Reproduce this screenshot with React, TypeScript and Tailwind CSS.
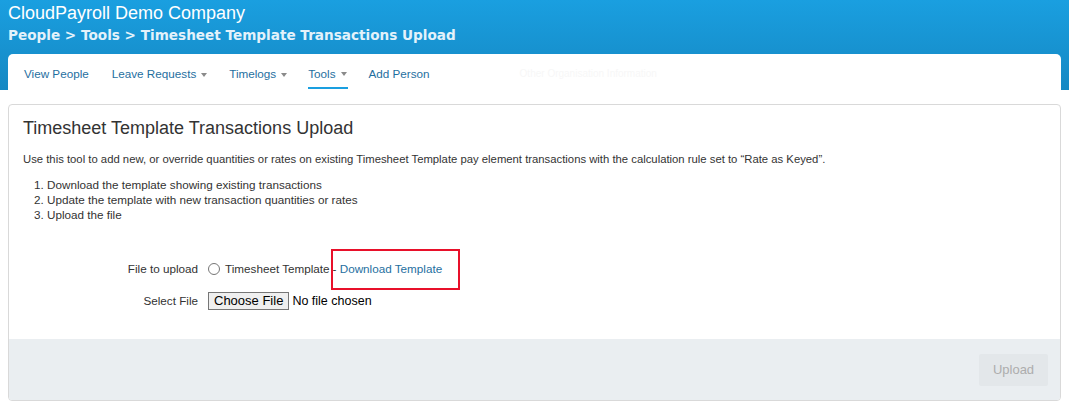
import React from "react";

function Caret() {
  return <span className="ml-[5px] inline-block h-0 w-0 border-x-[3px] border-t-[4px] border-x-transparent border-t-[#8a8a8a] align-middle" />;
}

export default function App() {
  return (
    <div className="min-h-[411px] bg-white font-['Liberation_Sans',Arial,sans-serif] text-[#333]">
      <header className="h-[90px] bg-gradient-to-b from-[#1a9fe0] to-[#1588c3] px-2 pt-[2px]">
        <h1 className="text-[18px] leading-[22px] text-white">CloudPayroll Demo Company</h1>
        <p className="mt-[1px] font-['DejaVu_Sans',Verdana,sans-serif] text-[13.6px] font-bold leading-[20px] text-[#e3f2fb]">
          People &gt; Tools &gt; Timesheet Template Transactions Upload
        </p>
      </header>

      <nav className="relative -mt-[36px] mx-2 flex h-[36px] items-center rounded-t-[5px] bg-white px-4 pt-[3px] text-[11.7px] text-[#1f6f9f]">
        <a className="mr-[23px]">View People</a>
        <a className="mr-[22px]">
          Leave Requests
          <Caret />
        </a>
        <a className="mr-[21px]">
          Timelogs
          <Caret />
        </a>
        <a className="relative mr-[22px] flex h-full items-center">
          Tools
          <Caret />
          <span className="absolute bottom-[1px] left-0 -right-[1px] h-[2px] bg-[#1a9fe0]" />
        </a>
        <a className="mr-[90px]">Add Person</a>
        <span className="text-[10px] text-[#f7f7f7]">Other Organisation Information</span>
      </nav>

      <main className="mx-2 mt-[14px] overflow-hidden rounded-[4px] border border-[#d9d9d9]">
        <div className="px-[14px] pb-[29px] pt-[12px]">
          <h2 className="text-[18px] leading-[22px] text-[#333]">Timesheet Template Transactions Upload</h2>
          <p className="mt-[13px] text-[11.3px] leading-[14px]">
            Use this tool to add new, or override quantities or rates on existing Timesheet Template pay element transactions with the calculation rule set to “Rate as Keyed”.
          </p>
          <ol className="mt-[11px] list-decimal pl-[24px] text-[11.7px] leading-[15px]">
            <li>Download the template showing existing transactions</li>
            <li>Update the template with new transaction quantities or rates</li>
            <li>Upload the file</li>
          </ol>

          <div className="mt-[38px] grid grid-cols-[175px_1fr] items-center gap-x-[10px] gap-y-[14px] text-[11.7px]">
            <label className="text-right">File to upload</label>
            <div className="flex items-center">
              <span className="mr-[5px] inline-block h-[12px] w-[12px] rounded-full border border-[#767676] bg-white" />
              <span>Timesheet Template</span>
              <span className="relative ml-[3px]">
                - <a className="text-[#1f6f9f]">Download Template</a>
                <span className="absolute -left-[2px] -right-[18px] -top-[11px] -bottom-[12px] border-2 border-[#e8102a]" />
              </span>
            </div>
            <label className="text-right">Select File</label>
            <div className="flex items-center">
              <button className="h-[18px] border border-[#767676] bg-[#efefef] px-[5px] text-[13px] leading-[14px] text-black">
                Choose File
              </button>
              <span className="ml-[3px] text-[12.5px] text-black">No file chosen</span>
            </div>
          </div>
        </div>
        <div className="flex h-[61px] items-center justify-end bg-[#eaeef1] px-[12px]">
          <button className="h-[32px] w-[69px] rounded-[2px] bg-[#e3e7ea] text-[13px] text-[#adadad]">Upload</button>
        </div>
      </main>
    </div>
  );
}
